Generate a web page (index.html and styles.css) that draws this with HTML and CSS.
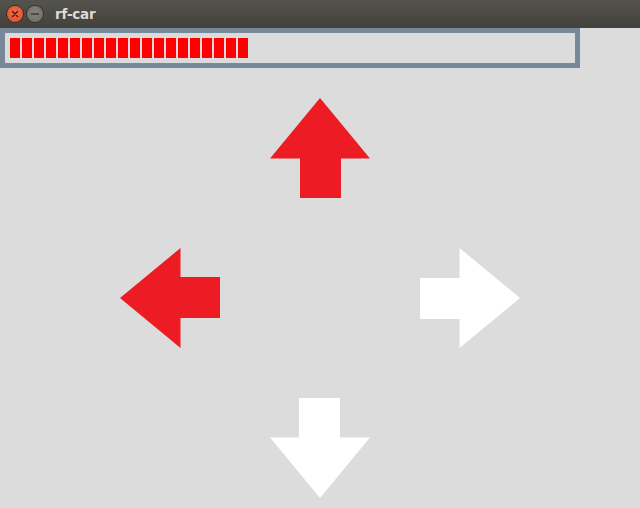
FILE: index.html
```html
<!DOCTYPE html>
<html>
<head>
<meta charset="utf-8">
<link rel="stylesheet" href="styles.css">
</head>
<body>
<div class="titlebar">
  <div class="btn btn-close">
    <svg width="16" height="16" viewBox="0 0 16 16"><path d="M5.5 5.5 L10.5 10.5 M10.5 5.5 L5.5 10.5" stroke="#3a1a10" stroke-width="1.4" stroke-linecap="round"/></svg>
  </div>
  <div class="btn btn-min">
    <svg width="16" height="16" viewBox="0 0 16 16"><path d="M4.5 8 L11.5 8" stroke="#3b3a36" stroke-width="1.4" stroke-linecap="round"/></svg>
  </div>
  <span class="title">rf-car</span>
</div>
<div class="meter">
  <div class="seg"></div><div class="seg"></div><div class="seg"></div><div class="seg"></div><div class="seg"></div>
  <div class="seg"></div><div class="seg"></div><div class="seg"></div><div class="seg"></div><div class="seg"></div>
  <div class="seg"></div><div class="seg"></div><div class="seg"></div><div class="seg"></div><div class="seg"></div>
  <div class="seg"></div><div class="seg"></div><div class="seg"></div><div class="seg"></div><div class="seg"></div>
</div>
<div class="pad">
  <svg class="arrow up" viewBox="0 0 100 100"><polygon points="50,0 100,60.5 71,60.5 71,100 30,100 30,60.5 0,60.5" fill="#ed1c24"/></svg>
  <svg class="arrow left" viewBox="0 0 100 100"><polygon points="0,50 60.5,0 60.5,29 100,29 100,70 60.5,70 60.5,100" fill="#ed1c24"/></svg>
  <svg class="arrow right" viewBox="0 0 100 100"><polygon points="100,50 39.5,0 39.5,30 0,30 0,71 39.5,71 39.5,100" fill="#ffffff"/></svg>
  <svg class="arrow down" viewBox="0 0 100 100"><polygon points="50,100 100,39.5 70,39.5 70,0 29,0 29,39.5 0,39.5" fill="#ffffff"/></svg>
</div>
</body>
</html>
```
FILE: styles.css
```css
html, body {
  margin: 0;
  padding: 0;
  width: 640px;
  height: 508px;
  overflow: hidden;
  background: #dcdcdc;
}
.titlebar {
  height: 28px;
  background: linear-gradient(#55534e, #42413c);
  display: flex;
  align-items: center;
  padding-left: 7px;
  gap: 4px;
  box-sizing: border-box;
}
.btn {
  width: 16px;
  height: 16px;
  border-radius: 50%;
  display: flex;
}
.btn-close {
  background: radial-gradient(circle at 50% 40%, #f0704a, #e0491f);
  box-shadow: 0 0 0 1px #3a2a22;
}
.btn-min {
  background: radial-gradient(circle at 50% 40%, #85847f, #6a6964);
  box-shadow: 0 0 0 1px #33322e;
}
.title {
  margin-left: 8px;
  font-family: "DejaVu Sans", sans-serif;
  font-weight: bold;
  font-size: 13.5px;
  color: #dfdbd2;
  letter-spacing: -0.2px;
}
.meter {
  width: 580px;
  height: 40px;
  box-sizing: border-box;
  border: 5px solid #778899;
  padding: 5px;
  display: flex;
  gap: 2px;
}
.seg {
  width: 10px;
  height: 20px;
  background: #ff0000;
}
.pad {
  margin-top: 30px;
  margin-left: 120px;
  display: grid;
  grid-template-columns: 100px 100px 100px;
  grid-template-rows: 100px 100px 100px;
  gap: 50px;
}
.arrow {
  width: 100px;
  height: 100px;
  display: block;
}
.up { grid-column: 2; grid-row: 1; }
.left { grid-column: 1; grid-row: 2; }
.right { grid-column: 3; grid-row: 2; }
.down { grid-column: 2; grid-row: 3; }
```
